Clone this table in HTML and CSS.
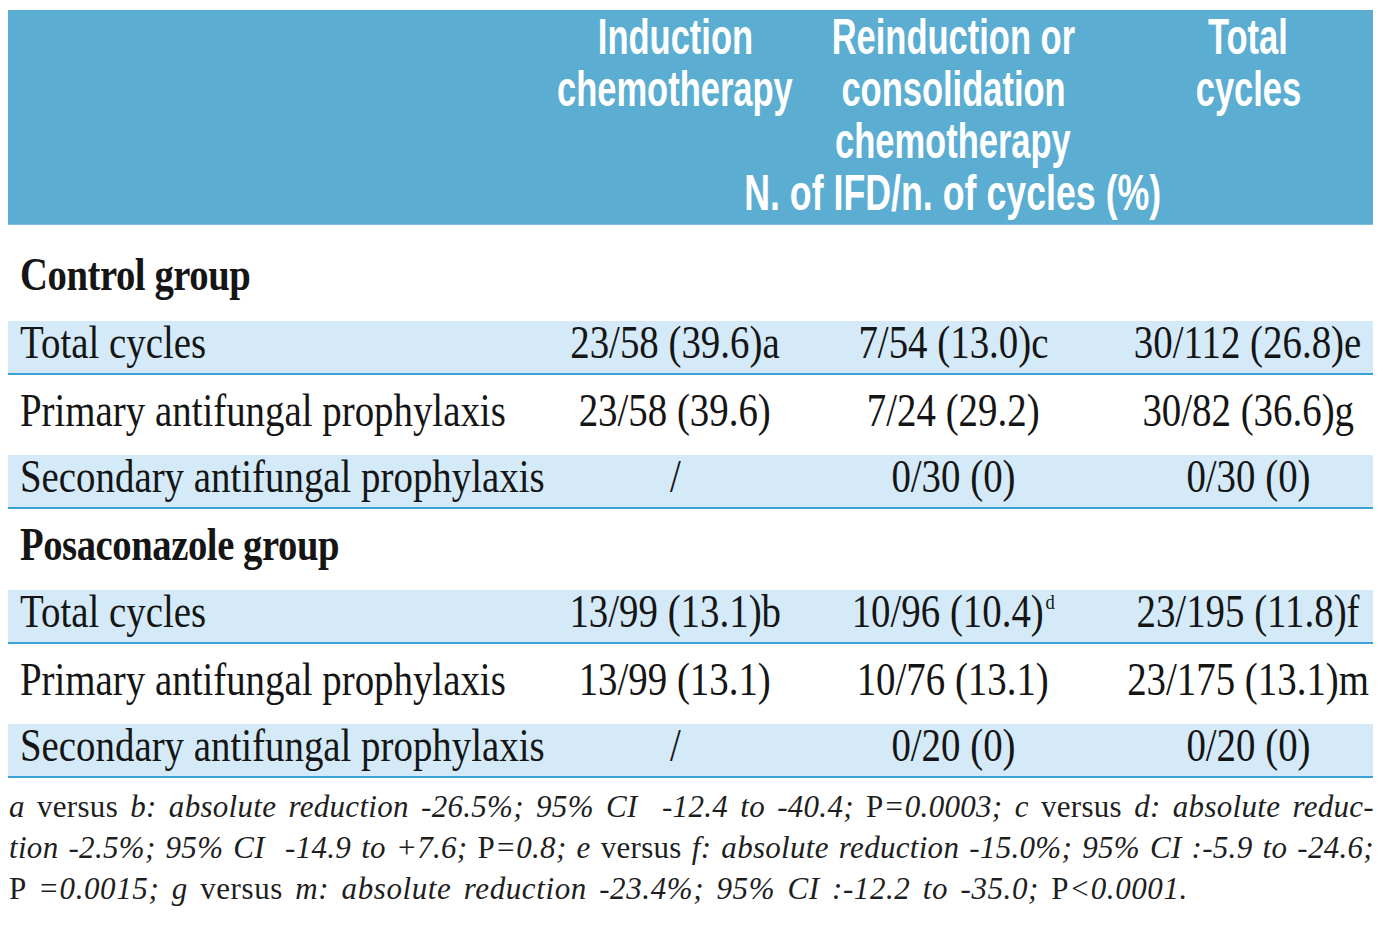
FILE: index.html
```html
<!DOCTYPE html>
<html lang="en">
<head>
<meta charset="utf-8">
<title>IFD table</title>
<link rel="stylesheet" href="styles.css">
</head>
<body>
<div class="table">
  <div class="row head">
    <div class="hcell"></div>
    <div class="hcell"><span class="h">Induction</span><span class="h">chemotherapy</span></div>
    <div class="hcell"><span class="h">Reinduction or</span><span class="h">consolidation</span><span class="h">chemotherapy</span><span class="h wide">N. of IFD/n. of cycles (%)</span></div>
    <div class="hcell last"><span class="h">Total</span><span class="h">cycles</span></div>
  </div>

  <div class="row group g1"><div class="cell lab"><span class="t b">Control group</span></div></div>
  <div class="row band r-total"><div class="cell lab"><span class="t">Total cycles</span></div><div class="cell c"><span class="t">23/58 (39.6)a</span></div><div class="cell c"><span class="t">7/54 (13.0)c</span></div><div class="cell c last"><span class="t">30/112 (26.8)e</span></div></div>
  <div class="row r-primary"><div class="cell lab"><span class="t">Primary antifungal prophylaxis</span></div><div class="cell c"><span class="t">23/58 (39.6)</span></div><div class="cell c"><span class="t">7/24 (29.2)</span></div><div class="cell c last"><span class="t">30/82 (36.6)g</span></div></div>
  <div class="row band r-secondary"><div class="cell lab"><span class="t">Secondary antifungal prophylaxis</span></div><div class="cell c"><span class="t">/</span></div><div class="cell c"><span class="t">0/30 (0)</span></div><div class="cell c last"><span class="t">0/30 (0)</span></div></div>

  <div class="row group g2"><div class="cell lab"><span class="t b">Posaconazole group</span></div></div>
  <div class="row band r-total"><div class="cell lab"><span class="t">Total cycles</span></div><div class="cell c"><span class="t">13/99 (13.1)b</span></div><div class="cell c"><span class="t">10/96 (10.4)<sup class="sup">d</sup></span></div><div class="cell c last"><span class="t">23/195 (11.8)f</span></div></div>
  <div class="row r-primary"><div class="cell lab"><span class="t">Primary antifungal prophylaxis</span></div><div class="cell c"><span class="t">13/99 (13.1)</span></div><div class="cell c"><span class="t">10/76 (13.1)</span></div><div class="cell c last"><span class="t">23/175 (13.1)m</span></div></div>
  <div class="row band r-secondary"><div class="cell lab"><span class="t">Secondary antifungal prophylaxis</span></div><div class="cell c"><span class="t">/</span></div><div class="cell c"><span class="t">0/20 (0)</span></div><div class="cell c last"><span class="t">0/20 (0)</span></div></div>
</div>

<div class="notes">
  <p class="line just"><i>a</i> versus <i>b: absolute reduction -26.5%; 95% CI &nbsp;-12.4 to -40.4;</i> P<i>=0.0003; c</i> versus <i>d: absolute reduc-</i></p>
  <p class="line just"><i>tion -2.5%; 95% CI &nbsp;-14.9 to +7.6;</i> P<i>=0.8; e</i> versus <i>f: absolute reduction -15.0%; 95% CI :-5.9 to -24.6;</i></p>
  <p class="line last-line">P <i>=0.0015; g</i> versus <i>m: absolute reduction -23.4%; 95% CI :-12.2 to -35.0;</i> P<i>&lt;0.0001.</i></p>
</div>
</body>
</html>
```
FILE: styles.css
```css
html, body {
  margin: 0;
  padding: 0;
  background: #ffffff;
}

body {
  font-family: "Liberation Serif", "Times New Roman", serif;
  color: #151515;
}

.table {
  width: 1365px;
  margin: 10px 0 0 8px;
}

.row {
  display: grid;
  grid-template-columns: 532px 270px 286px 277px;
}

.head {
  height: 215px;
  background: #5badd1;
  box-shadow: inset 0 -1px 0 #7cc0df;
}

.hcell {
  display: flex;
  flex-direction: column;
  align-items: center;
  padding-top: 1px;
  font-family: "Liberation Sans", Arial, sans-serif;
  font-weight: bold;
  font-size: 50px;
  line-height: 52px;
  color: #ffffff;
}

.hcell.last,
.cell.last {
  padding-left: 27px;
}

.h {
  display: block;
  white-space: nowrap;
  transform: scaleX(0.69);
  transform-origin: center center;
}

.h.wide {
  transform: scaleX(0.715);
}

.cell {
  display: flex;
  font-size: 46px;
  line-height: 42px;
  white-space: nowrap;
}

.cell.lab {
  padding-left: 12px;
}

.cell.c {
  justify-content: center;
}

.t {
  display: inline-block;
  white-space: nowrap;
  transform: scaleX(0.845);
  transform-origin: left center;
}

.cell.c .t {
  transform-origin: center center;
}

.t.b {
  font-weight: bold;
  transform: scaleX(0.84);
  letter-spacing: -0.5px;
}

.sup {
  font-size: 22px;
  line-height: 0;
  vertical-align: 18px;
  margin-left: 2px;
}

.band {
  background: #d4eaf8;
  border-bottom: 2px solid #3aa2d4;
}

.g1 {
  height: 96px;
  padding-top: 29px;
  box-sizing: border-box;
}

.g2 {
  height: 81px;
  padding-top: 15px;
  box-sizing: border-box;
}

.r-total {
  height: 54px;
  padding-top: 1px;
  box-sizing: border-box;
}

.r-primary {
  height: 80px;
  padding-top: 15px;
  box-sizing: border-box;
}

.r-secondary {
  height: 54px;
  padding-top: 1px;
  box-sizing: border-box;
}

.notes {
  width: 1365px;
  margin: 0 0 0 9px;
  padding-top: 8px;
  font-size: 31px;
  line-height: 41px;
  letter-spacing: 0.3px;
  color: #1e1e1e;
}

.line {
  margin: 0;
  white-space: nowrap;
}

.line.just {
  white-space: normal;
  text-align: justify;
  text-align-last: justify;
}

.line.last-line {
  letter-spacing: 0.6px;
  word-spacing: 4px;
}

.line i {
  font-style: italic;
}
```
